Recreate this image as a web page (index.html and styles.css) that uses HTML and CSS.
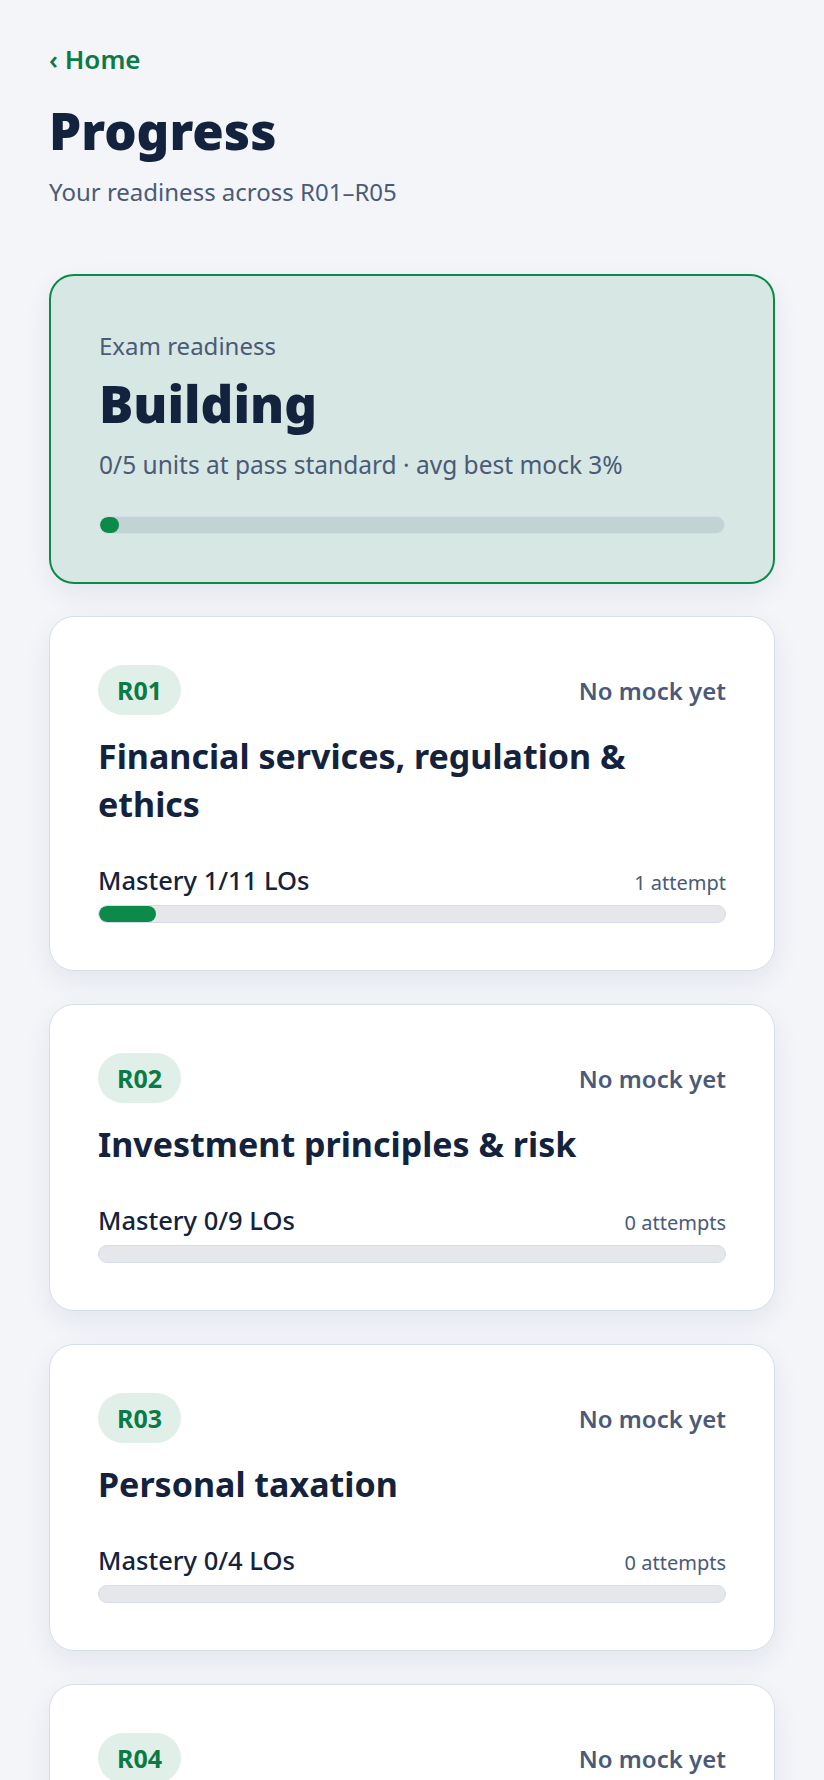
FILE: index.html
```html
<!DOCTYPE html>
<html lang="en">
<head>
    <meta charset="UTF-8">
    <title>Progress</title>
    <link rel="stylesheet" href="styles.css">
</head>
<body>
<main class="Page">
    <a class="Back" href="#">&lsaquo; Home</a>
    <h1 class="Page-title">Progress</h1>
    <p class="Page-sub">Your readiness across R01&ndash;R05</p>

    <section class="Ready">
        <div class="Ready-label">Exam readiness</div>
        <div class="Ready-state">Building</div>
        <div class="Ready-meta">0/5 units at pass standard &middot; avg best mock 3%</div>
        <div class="Bar Bar--ready"><span class="Bar-fill" style="width: 3%"></span></div>
    </section>

    <ul class="Units">
        <li class="Unit">
            <div class="Unit-head">
                <span class="Badge">R01</span>
                <span class="Unit-mock">No mock yet</span>
            </div>
            <h2 class="Unit-title">Financial services, regulation &amp; ethics</h2>
            <div class="Unit-row">
                <span class="Unit-mastery">Mastery 1/11 LOs</span>
                <span class="Unit-attempts">1 attempt</span>
            </div>
            <div class="Bar"><span class="Bar-fill" style="width: 9.09%"></span></div>
        </li>
        <li class="Unit">
            <div class="Unit-head">
                <span class="Badge">R02</span>
                <span class="Unit-mock">No mock yet</span>
            </div>
            <h2 class="Unit-title">Investment principles &amp; risk</h2>
            <div class="Unit-row">
                <span class="Unit-mastery">Mastery 0/9 LOs</span>
                <span class="Unit-attempts">0 attempts</span>
            </div>
            <div class="Bar"><span class="Bar-fill" style="width: 0%"></span></div>
        </li>
        <li class="Unit">
            <div class="Unit-head">
                <span class="Badge">R03</span>
                <span class="Unit-mock">No mock yet</span>
            </div>
            <h2 class="Unit-title">Personal taxation</h2>
            <div class="Unit-row">
                <span class="Unit-mastery">Mastery 0/4 LOs</span>
                <span class="Unit-attempts">0 attempts</span>
            </div>
            <div class="Bar"><span class="Bar-fill" style="width: 0%"></span></div>
        </li>
        <li class="Unit">
            <div class="Unit-head">
                <span class="Badge">R04</span>
                <span class="Unit-mock">No mock yet</span>
            </div>
            <h2 class="Unit-title">Pensions &amp; retirement planning</h2>
            <div class="Unit-row">
                <span class="Unit-mastery">Mastery 0/8 LOs</span>
                <span class="Unit-attempts">0 attempts</span>
            </div>
            <div class="Bar"><span class="Bar-fill" style="width: 0%"></span></div>
        </li>
        <li class="Unit">
            <div class="Unit-head">
                <span class="Badge">R05</span>
                <span class="Unit-mock">No mock yet</span>
            </div>
            <h2 class="Unit-title">Financial protection</h2>
            <div class="Unit-row">
                <span class="Unit-mastery">Mastery 0/6 LOs</span>
                <span class="Unit-attempts">0 attempts</span>
            </div>
            <div class="Bar"><span class="Bar-fill" style="width: 0%"></span></div>
        </li>
    </ul>
</main>
</body>
</html>
```

FILE: styles.css
```css
html, body {
    margin: 0;
    padding: 0;
}
body {
    font-family: "Noto Sans", "Open Sans", sans-serif;
    background: #f3f5f9;
    color: #13223d;
    -webkit-font-smoothing: antialiased;
}
.Page {
    padding: 40px 49px 60px;
}
.Back {
    display: block;
    font-size: 26px;
    line-height: 39px;
    font-weight: 600;
    color: #0b7a45;
    text-decoration: none;
}
.Page-title {
    margin: 21px 0 0;
    font-size: 51px;
    line-height: 61px;
    font-weight: 900;
    color: #13223d;
}
.Page-sub {
    margin: 13px 0 0;
    font-size: 24px;
    line-height: 36px;
    color: #4a5a78;
}

/* readiness summary */
.Ready {
    margin-top: 64px;
    padding: 52px 48px 48px;
    background: #d7e7e3;
    border: 2px solid #0b8a4a;
    border-radius: 25px;
    box-shadow: 0 10px 28px rgba(20, 35, 70, 0.07);
}
.Ready-label {
    font-size: 24px;
    line-height: 36px;
    color: #4a5a78;
}
.Ready-state {
    margin-top: 9px;
    font-size: 51px;
    line-height: 61px;
    font-weight: 900;
    color: #13223d;
}
.Ready-meta {
    margin-top: 13px;
    font-size: 24.5px;
    line-height: 36px;
    color: #4a5a78;
}

.Bar {
    height: 16px;
    border: 1px solid #d6dcea;
    border-radius: 9px;
    background: #e5e7eb;
    overflow: hidden;
}
.Bar--ready {
    margin-top: 33px;
    background: #c1d3d3;
}
.Bar-fill {
    display: block;
    height: 100%;
    border-radius: 9px;
    background: #0b8a4a;
}
.Bar--ready .Bar-fill {
    min-width: 18px;
}

/* units */
.Units {
    list-style: none;
    margin: 32px 0 0;
    padding: 0;
    display: flex;
    flex-direction: column;
    gap: 33px;
}
.Unit {
    padding: 48px 48px 47px;
    background: #fff;
    border: 1.5px solid #d5deeb;
    border-radius: 25px;
    box-shadow: 0 10px 28px rgba(20, 35, 70, 0.07);
}
.Unit-head {
    display: flex;
    align-items: center;
    justify-content: space-between;
}
.Badge {
    display: inline-flex;
    align-items: center;
    height: 50px;
    padding: 0 19px;
    border-radius: 25px;
    background: #e0f0e8;
    color: #0b7a45;
    font-size: 25px;
    font-weight: 700;
}
.Unit-mock {
    font-size: 24px;
    font-weight: 600;
    color: #4a5a78;
}
.Unit-title {
    margin: 17px 0 0;
    font-size: 34px;
    line-height: 48px;
    font-weight: 700;
    color: #13223d;
}
.Unit-row {
    margin-top: 33px;
    display: flex;
    align-items: baseline;
    justify-content: space-between;
}
.Unit-mastery {
    font-size: 25.5px;
    line-height: 38px;
    font-weight: 500;
    color: #13223d;
}
.Unit-attempts {
    font-size: 20px;
    color: #4a5a78;
}
.Unit .Bar {
    margin-top: 6px;
}
```
